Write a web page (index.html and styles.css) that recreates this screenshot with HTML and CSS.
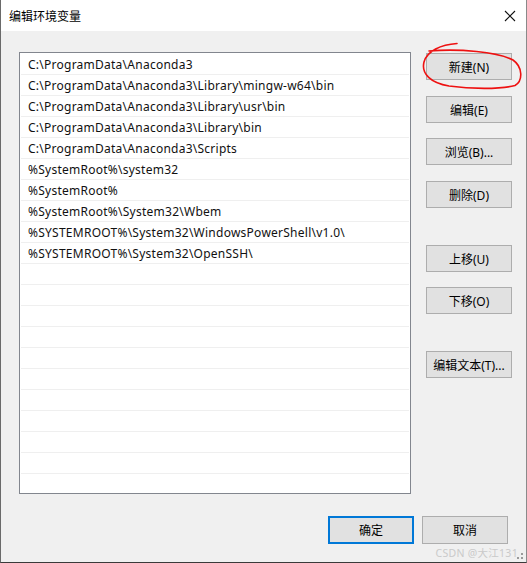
FILE: index.html
```html
<!DOCTYPE html>
<html lang="zh-CN">
<head>
<meta charset="utf-8">
<title>编辑环境变量</title>
<link rel="stylesheet" href="styles.css">
</head>
<body>
<div class="window">
  <div class="titlebar">
    <span class="title">编辑环境变量</span>
    <svg class="close" width="12" height="12" viewBox="0 0 12 12"><path d="M1 1L11 11M11 1L1 11" stroke="#111" stroke-width="1.1" fill="none"/></svg>
  </div>
  <div class="content">
    <div class="main">
      <div class="list">
        <div class="row">C:\ProgramData\Anaconda3</div>
        <div class="row">C:\ProgramData\Anaconda3\Library\mingw-w64\bin</div>
        <div class="row">C:\ProgramData\Anaconda3\Library\usr\bin</div>
        <div class="row">C:\ProgramData\Anaconda3\Library\bin</div>
        <div class="row">C:\ProgramData\Anaconda3\Scripts</div>
        <div class="row">%SystemRoot%\system32</div>
        <div class="row">%SystemRoot%</div>
        <div class="row">%SystemRoot%\System32\Wbem</div>
        <div class="row">%SYSTEMROOT%\System32\WindowsPowerShell\v1.0\</div>
        <div class="row">%SYSTEMROOT%\System32\OpenSSH\</div>
        <div class="row"></div>
        <div class="row"></div>
        <div class="row"></div>
        <div class="row"></div>
        <div class="row"></div>
        <div class="row"></div>
        <div class="row"></div>
        <div class="row"></div>
        <div class="row"></div>
        <div class="row"></div>
        <div class="row"></div>
      </div>
      <div class="side">
        <button class="btn">新建(N)</button>
        <button class="btn gap16">编辑(E)</button>
        <button class="btn gap15">浏览(B)...</button>
        <button class="btn gap16">删除(D)</button>
        <button class="btn gap37">上移(U)</button>
        <button class="btn gap15">下移(O)</button>
        <button class="btn gap37">编辑文本(T)...</button>
      </div>
    </div>
    <div class="footer">
      <button class="btn default">确定</button>
      <button class="btn">取消</button>
    </div>
  </div>
  <svg class="scribble" width="527" height="563" viewBox="0 0 527 563">
    <path d="M457 43.5 C441 44.5 427 51 424 62 C421 74 431 83 449 86 C470 89 500 89.5 515 85.5 C523 81 523 67 513 60 C497 52 460 48.5 429 51" stroke="#ee1111" stroke-width="1.6" fill="none" stroke-linecap="round"/>
  </svg>
  <div class="watermark">CSDN @大江131</div>
  <svg class="grip" width="6" height="6" viewBox="0 0 6 6"><rect x="4" y="0" width="2" height="2" fill="#9a9a9a"/><rect x="0" y="4" width="2" height="2" fill="#9a9a9a"/><rect x="4" y="4" width="2" height="2" fill="#9a9a9a"/></svg>
</div>
</body>
</html>
```
FILE: styles.css
```css
* { box-sizing: border-box; }
html, body { margin: 0; padding: 0; background: #f0f0f0; }
body {
  font-family: "Noto Sans", "Noto Sans CJK SC", sans-serif;
  font-size: 12px;
  color: #000;
}
.window {
  position: relative;
  width: 527px;
  height: 563px;
  background: #f0f0f0;
  border-left: 1px solid #6a6a6a;
  border-right: 1px solid #8a8a8a;
  border-bottom: 1px solid #3a3a3a;
  overflow: hidden;
}
.titlebar {
  height: 31px;
  background: #fff;
  display: flex;
  align-items: center;
  justify-content: space-between;
  padding: 0 9px 0 8px;
}
.title {
  font-family: "Noto Sans CJK SC", sans-serif;
  font-size: 12px;
  line-height: 14px;
}
.close { margin-right: 1px; }
.content {
  padding: 21px 0 0 18px;
}
.main {
  display: flex;
  align-items: flex-start;
}
.list {
  width: 392px;
  height: 442px;
  background: #fff;
  border: 1px solid #82868e;
  padding-top: 1px;
  overflow: hidden;
}
.row {
  height: 21px;
  line-height: 21px;
  padding-left: 7px;
  margin: 0 1px;
  border-bottom: 1px solid #efefef;
  white-space: nowrap;
  letter-spacing: 0.25px;
  color: #111;
}
.side {
  display: flex;
  flex-direction: column;
  margin-left: 15px;
  padding-top: 1px;
}
.btn {
  width: 86px;
  height: 27px;
  background: #e1e1e1;
  border: 1px solid #adadad;
  font-family: "Noto Sans", "Noto Sans CJK SC", sans-serif;
  font-size: 12px;
  color: #000;
  padding: 0;
  margin: 0;
}
.gap15 { margin-top: 15px; }
.gap16 { margin-top: 16px; }
.gap37 { margin-top: 37px; }
.footer {
  display: flex;
  gap: 8px;
  margin-top: 22px;
  padding-left: 309px;
}
.footer .btn { height: 28px; }
.btn.default {
  border: 2px solid #0078d7;
}
.scribble {
  position: absolute;
  left: -1px;
  top: 0;
  pointer-events: none;
}
.watermark {
  position: absolute;
  right: 8px;
  top: 546px;
  font-family: "Noto Sans", "Noto Sans CJK SC", sans-serif;
  font-size: 10.5px;
  line-height: 14px;
  letter-spacing: 0.3px;
  color: #cacaca;
}
.grip {
  position: absolute;
  right: 3px;
  bottom: 3px;
}
```
